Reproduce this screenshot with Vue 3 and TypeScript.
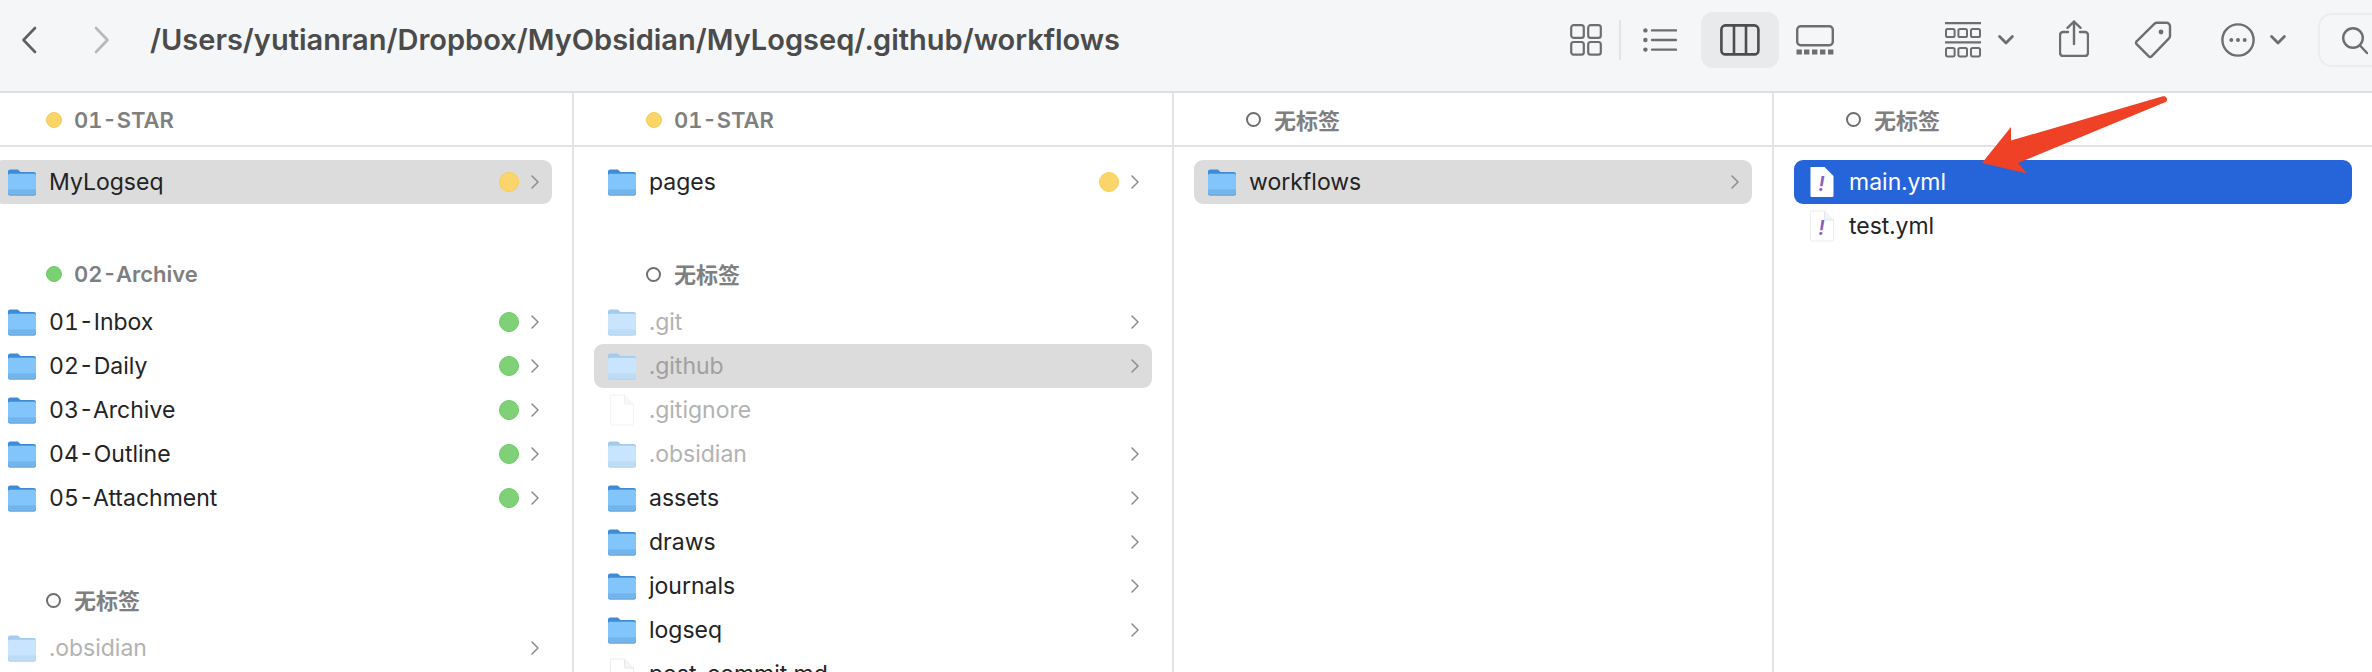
<script setup lang="ts">
type Item = {
  name: string
  kind?: 'folder' | 'doc' | 'yaml'
  dim?: boolean
  dot?: 'yellow' | 'green'
  sel?: 'gray' | 'blue'
}
type Group = { title: string; tag: 'yellow' | 'green' | 'none'; items: Item[] }
type Column = { groups: Group[] }

const columns: Column[] = [
  {
    groups: [
      { title: '01-STAR', tag: 'yellow', items: [{ name: 'MyLogseq', dot: 'yellow', sel: 'gray' }] },
      {
        title: '02-Archive',
        tag: 'green',
        items: ['01-Inbox', '02-Daily', '03-Archive', '04-Outline', '05-Attachment'].map((name) => ({
          name,
          dot: 'green' as const,
        })),
      },
      { title: '无标签', tag: 'none', items: [{ name: '.obsidian', dim: true }] },
    ],
  },
  {
    groups: [
      { title: '01-STAR', tag: 'yellow', items: [{ name: 'pages', dot: 'yellow' }] },
      {
        title: '无标签',
        tag: 'none',
        items: [
          { name: '.git', dim: true },
          { name: '.github', dim: true, sel: 'gray' },
          { name: '.gitignore', dim: true, kind: 'doc' },
          { name: '.obsidian', dim: true },
          { name: 'assets' },
          { name: 'draws' },
          { name: 'journals' },
          { name: 'logseq' },
          { name: 'post_commit.md', kind: 'doc' },
        ],
      },
    ],
  },
  { groups: [{ title: '无标签', tag: 'none', items: [{ name: 'workflows', sel: 'gray' }] }] },
  {
    groups: [
      {
        title: '无标签',
        tag: 'none',
        items: [
          { name: 'main.yml', kind: 'yaml', sel: 'blue' },
          { name: 'test.yml', kind: 'yaml' },
        ],
      },
    ],
  },
]

const path = '/Users/yutianran/Dropbox/MyObsidian/MyLogseq/.github/workflows'
</script>

<template>
  <div class="finder">
    <svg class="defs" width="0" height="0" aria-hidden="true">
      <defs>
        <symbol id="folder" viewBox="0 0 28 27">
          <rect x="0.5" y="5" width="27" height="22" rx="2" fill="#8f8f8f" opacity="0.4" />
          <path d="M0 2.6A2.2 2.2 0 0 1 2.2.4h6.6c1 0 1.5.4 2.1 1l1.6 1.6h13.3A2.2 2.2 0 0 1 28 5.2V10H0z" fill="#3f8bd6" />
          <path d="M0 6.4a1.6 1.6 0 0 1 1.6-1.6h24.8A1.6 1.6 0 0 1 28 6.4v17.4a2 2 0 0 1-2 2H2a2 2 0 0 1-2-2z" fill="#82c5fa" />
          <path d="M0 21h28v2.8a2 2 0 0 1-2 2H2a2 2 0 0 1-2-2z" fill="#76b9f0" />
          <path d="M0 21h28M0 23.2h28" stroke="#68ade6" stroke-width="0.7" />
          <path d="M0 24.2a1.8 1.8 0 0 0 1.8 1.8h24.4a1.8 1.8 0 0 0 1.8-1.8" fill="none" stroke="#5b97cc" stroke-width="0.9" />
        </symbol>
        <symbol id="folder-dim" viewBox="0 0 28 27">
          <rect x="0.5" y="5" width="27" height="22" rx="2" fill="#d8d8d8" opacity="0.6" />
          <path d="M0 2.6A2.2 2.2 0 0 1 2.2.4h6.6c1 0 1.5.4 2.1 1l1.6 1.6h13.3A2.2 2.2 0 0 1 28 5.2V10H0z" fill="#a4cbec" />
          <path d="M0 6.4a1.6 1.6 0 0 1 1.6-1.6h24.8A1.6 1.6 0 0 1 28 6.4v17.4a2 2 0 0 1-2 2H2a2 2 0 0 1-2-2z" fill="#c8e5fd" />
          <path d="M0 21h28v2.8a2 2 0 0 1-2 2H2a2 2 0 0 1-2-2z" fill="#c0dff9" />
          <path d="M0 21h28M0 23.2h28" stroke="#b4d6f2" stroke-width="0.7" />
          <path d="M0 24.2a1.8 1.8 0 0 0 1.8 1.8h24.4a1.8 1.8 0 0 0 1.8-1.8" fill="none" stroke="#aecce6" stroke-width="0.9" />
        </symbol>
      </defs>
    </svg>

    <header class="toolbar">
      <svg class="back" width="16" height="28" viewBox="0 0 16 28">
        <path d="M14 2 2.5 14 14 26" fill="none" stroke="#606060" stroke-width="2.6" stroke-linecap="round" stroke-linejoin="round" />
      </svg>
      <svg class="forward" width="16" height="28" viewBox="0 0 16 28">
        <path d="M2 2 13.5 14 2 26" fill="none" stroke="#b8b8b8" stroke-width="2.6" stroke-linecap="round" stroke-linejoin="round" />
      </svg>
      <div class="path">{{ path }}</div>

      <svg class="i-grid" width="32" height="32" viewBox="0 0 32 32" fill="none" stroke="#6e6e6e" stroke-width="2.2">
        <rect x="1.2" y="1.2" width="12.6" height="12.6" rx="2.4" />
        <rect x="18.2" y="1.2" width="12.6" height="12.6" rx="2.4" />
        <rect x="1.2" y="18" width="12.6" height="12.6" rx="2.4" />
        <rect x="18.2" y="18" width="12.6" height="12.6" rx="2.4" />
      </svg>
      <span class="divider"></span>
      <svg class="i-list" width="34" height="24" viewBox="0 0 34 24">
        <g fill="#6e6e6e">
          <circle cx="2.4" cy="2.4" r="2.2" />
          <circle cx="2.4" cy="12" r="2.2" />
          <circle cx="2.4" cy="21.6" r="2.2" />
        </g>
        <path d="M9 2.4h24M9 12h24M9 21.6h24" stroke="#6e6e6e" stroke-width="2.4" stroke-linecap="round" />
      </svg>
      <div class="view-active">
        <svg width="40" height="32" viewBox="0 0 40 32" fill="none" stroke="#4d4d4d" stroke-width="2.6">
          <rect x="1.4" y="1.4" width="37" height="29" rx="4" />
          <path d="M14 1.4v29M26 1.4v29" />
        </svg>
      </div>
      <svg class="i-gallery" width="38" height="30" viewBox="0 0 38 30">
        <rect x="1.2" y="1.2" width="35.6" height="19" rx="3.5" fill="none" stroke="#6e6e6e" stroke-width="2.4" />
        <g fill="#6e6e6e">
          <rect x="0.5" y="24.5" width="5.4" height="5" />
          <rect x="8" y="24.5" width="5.4" height="5" />
          <rect x="16" y="24.5" width="5.4" height="5" />
          <rect x="24" y="24.5" width="5.4" height="5" />
          <rect x="32" y="24.5" width="5.4" height="5" />
        </g>
      </svg>
      <svg class="i-groups" width="36" height="36" viewBox="0 0 36 36" fill="none" stroke="#6e6e6e">
        <path d="M0 1.2h36M0 20.4h36" stroke-width="2.2" />
        <g stroke-width="2">
          <rect x="1" y="7" width="8.6" height="8" rx="1.6" />
          <rect x="13.4" y="7" width="8.6" height="8" rx="1.6" />
          <rect x="26" y="7" width="9" height="8" rx="1.6" />
          <rect x="1" y="26" width="8.6" height="8.4" rx="1.6" />
          <rect x="13.4" y="26" width="8.6" height="8.4" rx="1.6" />
          <rect x="26" y="26" width="9" height="8.4" rx="1.6" />
        </g>
      </svg>
      <svg class="i-chev1" width="16" height="10" viewBox="0 0 16 10">
        <path d="M1.6 1.6 8 8l6.4-6.4" fill="none" stroke="#6e6e6e" stroke-width="2.8" stroke-linecap="round" stroke-linejoin="round" />
      </svg>
      <svg class="i-share" width="30" height="37" viewBox="0 0 30 37" fill="none" stroke="#6e6e6e" stroke-width="2.4" stroke-linecap="round" stroke-linejoin="round">
        <path d="M9 12H4a3 3 0 0 0-3 3v18a3 3 0 0 0 3 3h22a3 3 0 0 0 3-3V15a3 3 0 0 0-3-3h-5" />
        <path d="M15 1.5V24M8.5 7.8 15 1.5l6.5 6.3" />
      </svg>
      <svg class="i-tag" width="38" height="38" viewBox="0 0 38 38" fill="none">
        <path d="M2.6 20.4 20.6 2.6c.6-.6 1.3-.9 2.2-.9h9.6c2 0 3.6 1.6 3.6 3.6v9.8c0 .9-.3 1.7-1 2.3L17.6 35.3c-.8.8-2 .8-2.8 0L2.6 23.2c-.8-.8-.8-2 0-2.8z" stroke="#6e6e6e" stroke-width="2.4" stroke-linejoin="round" />
        <circle cx="27" cy="11" r="2.4" fill="#6e6e6e" />
      </svg>
      <svg class="i-more" width="34" height="34" viewBox="0 0 34 34">
        <circle cx="17" cy="17" r="15.6" fill="none" stroke="#6e6e6e" stroke-width="2.4" />
        <g fill="#6e6e6e">
          <circle cx="10.3" cy="17" r="2" />
          <circle cx="17" cy="17" r="2" />
          <circle cx="23.7" cy="17" r="2" />
        </g>
      </svg>
      <svg class="i-chev2" width="16" height="10" viewBox="0 0 16 10">
        <path d="M1.6 1.6 8 8l6.4-6.4" fill="none" stroke="#6e6e6e" stroke-width="2.8" stroke-linecap="round" stroke-linejoin="round" />
      </svg>
      <div class="search">
        <svg width="26" height="28" viewBox="0 0 26 28" fill="none" stroke="#6e6e6e" stroke-width="2.4" stroke-linecap="round">
          <circle cx="11" cy="11" r="9.8" />
          <path d="M18 18.5 25 26" />
        </svg>
      </div>
    </header>

    <main class="columns">
      <section v-for="(col, c) in columns" :key="c" class="column">
        <div v-for="(group, g) in col.groups" :key="g" class="group">
          <div class="group-head" :class="{ sticky: g === 0 }">
            <span class="tag" :class="group.tag"></span>
            <span class="title" :class="{ cjk: group.tag === 'none' }">{{ group.title }}</span>
          </div>
          <div class="items">
            <div
              v-for="item in group.items"
              :key="item.name"
              class="row"
              :class="[item.sel ? 'sel-' + item.sel : '', { dim: item.dim }]"
            >
              <svg v-if="(item.kind ?? 'folder') === 'folder'" class="icon" width="28" height="27">
                <use :href="item.dim ? '#folder-dim' : '#folder'" />
              </svg>
              <svg v-else class="icon doc" width="28" height="32" viewBox="0 0 28 32">
                <path
                  d="M2.5 1h14L25.5 10V30a1 1 0 0 1-1 1H3.5a1 1 0 0 1-1-1z"
                  fill="#fff"
                  :stroke="item.sel === 'blue' ? 'none' : '#e8e8e8'"
                  stroke-width="0.8"
                />
                <path v-if="item.sel !== 'blue'" d="M16.5 1v8a1 1 0 0 0 1 1h8" fill="#f4f4f4" stroke="#e2e2e2" stroke-width="0.8" />
                <text v-if="item.kind === 'yaml'" x="13.5" y="24.5" class="bang">!</text>
              </svg>
              <span class="name">{{ item.name }}</span>
              <span v-if="item.dot" class="dot" :class="item.dot"></span>
              <svg v-if="item.kind !== 'doc' && item.kind !== 'yaml'" class="chev" width="8" height="14" viewBox="0 0 8 14">
                <path d="M1 1l6 6-6 6" fill="none" stroke="#8c8c8c" stroke-width="1.5" stroke-linecap="round" stroke-linejoin="round" />
              </svg>
            </div>
          </div>
        </div>
      </section>
    </main>

    <svg class="arrow" width="2372" height="672" viewBox="0 0 2372 672" aria-hidden="true">
      <path d="M2162 96.5c2-.8 3.6-.3 4.6 1.4 1 1.6.6 3-1 4.2L2018 163l9 10.5-45-10.5 29-36v13.5z" fill="#ee4125" />
    </svg>
  </div>
</template>

<style>
html,
body {
  margin: 0;
  background: #fff;
}
</style>

<style scoped>
.finder {
  position: relative;
  width: 2372px;
  height: 672px;
  overflow: hidden;
  background: #fff;
  font-family: Inter, 'Noto Sans CJK SC', sans-serif;
  font-variant-numeric: tabular-nums;
}
.defs {
  position: absolute;
}
.toolbar {
  box-sizing: border-box;
  height: 93px;
  display: flex;
  align-items: center;
  padding-left: 21px;
  padding-bottom: 12px;
  background: #f5f6f8;
  border-bottom: 2px solid #dedede;
  overflow: hidden;
}
.toolbar > svg,
.toolbar > span,
.toolbar > div {
  flex: none;
}
.forward {
  margin-left: 57px;
}
.path {
  width: 1420px;
  margin-left: 40px;
  font-size: 29px;
  font-weight: 600;
  color: #4b4b4b;
  white-space: nowrap;
}
.divider {
  width: 2px;
  height: 40px;
  margin-left: 17px;
  background: #e2e3e5;
}
.i-list {
  margin-left: 22px;
}
.view-active {
  width: 78px;
  height: 56px;
  margin-left: 24px;
  border-radius: 12px;
  background: #e9eaec;
  display: flex;
  align-items: center;
  justify-content: center;
}
.i-gallery {
  margin-left: 17px;
}
.i-groups {
  margin-left: 111px;
}
.i-chev1 {
  margin-left: 17px;
}
.i-share {
  margin-left: 45px;
  margin-top: -2px;
}
.i-tag {
  margin-left: 45px;
  margin-top: 1px;
}
.i-more {
  margin-left: 49px;
}
.i-chev2 {
  margin-left: 15px;
}
.search {
  box-sizing: border-box;
  width: 90px;
  height: 54px;
  margin-left: 32px;
  padding: 2px 0 0 22px;
  border: 2px solid #eceded;
  border-radius: 14px;
  display: flex;
  align-items: center;
}
.columns {
  display: grid;
  grid-template-columns: repeat(4, 600px);
  margin-left: -26px;
  height: 579px;
}
.column {
  box-sizing: border-box;
  border-right: 2px solid #e4e4e4;
  overflow: hidden;
}
.column:last-child {
  border-right: 0;
}
.group-head {
  display: flex;
  align-items: center;
  gap: 12px;
  height: 44px;
  margin-top: 48px;
  margin-bottom: 4px;
  padding-left: 72px;
  font-size: 22px;
  font-weight: 600;
  color: #7f7f7f;
}
.group:nth-child(3) .group-head {
  margin-top: 58px;
}
.group-head.sticky {
  box-sizing: border-box;
  height: 54px;
  margin: 0 -2px 13px 0;
  padding-top: 1px;
  border-bottom: 2px solid #e4e4e4;
}
.title.cjk {
  margin-bottom: 2px;
}
.tag {
  box-sizing: border-box;
  width: 16px;
  height: 16px;
  border-radius: 50%;
}
.tag.yellow {
  background: #fbd568;
  border: 1px solid #f6cc55;
}
.tag.green {
  background: #7ad172;
  border: 1px solid #6fcb66;
}
.tag.none {
  border: 2px solid #6f6f6f;
  width: 15px;
  height: 15px;
  margin-right: 1px;
}
.row {
  box-sizing: border-box;
  display: flex;
  align-items: center;
  width: 558px;
  height: 44px;
  margin-left: 20px;
  padding: 0 13px 0 14px;
  border-radius: 9px;
  font-size: 23px;
  color: #232323;
}
.sel-gray {
  background: #dcdcdc;
}
.sel-blue {
  background: #2664d9;
  color: #fff;
}
.icon {
  flex: none;
}
.dim .doc {
  opacity: 0.6;
}
.dim .name {
  color: #b2b2b2;
}
.sel-gray.dim .name {
  color: #a0a0a0;
}
.name {
  margin-left: 13px;
  flex: 1;
  white-space: nowrap;
}
.dot {
  box-sizing: border-box;
  width: 20px;
  height: 20px;
  margin-right: 12px;
  border-radius: 50%;
}
.dot.yellow {
  background: #fbd56c;
  border: 1.5px solid #f8cf50;
}
.dot.green {
  background: #7fd077;
  border: 1.5px solid #6ccb63;
}
.chev {
  flex: none;
}
.bang {
  fill: #8a5fb8;
  font-size: 20px;
  font-weight: 600;
  font-style: italic;
  text-anchor: middle;
  font-family: Inter, sans-serif;
}
.arrow {
  position: absolute;
  left: 0;
  top: 0;
  pointer-events: none;
}
</style>
